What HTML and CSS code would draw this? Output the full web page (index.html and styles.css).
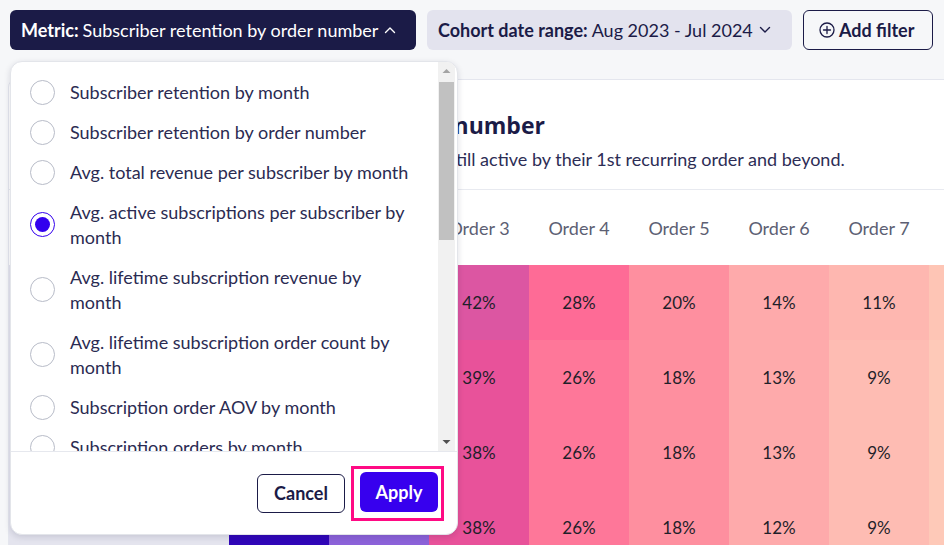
FILE: index.html
```html
<!DOCTYPE html>
<html lang="en">
<head>
<meta charset="utf-8">
<title>Retention</title>
<link rel="stylesheet" href="styles.css">
</head>
<body>
<div class="page">
  <div class="toolbar">
    <button class="pill pill-dark"><b>Metric:</b> Subscriber retention by order number
      <svg class="chev" width="12" height="8" viewBox="0 0 12 8"><path d="M1.5 6.5 L6 2 L10.5 6.5" fill="none" stroke="#ffffff" stroke-width="1.4" stroke-linecap="round" stroke-linejoin="round"/></svg>
    </button>
    <button class="pill pill-light"><b>Cohort date range:</b> Aug 2023 - Jul 2024
      <svg class="chev" width="12" height="8" viewBox="0 0 12 8"><path d="M1.5 1.5 L6 6 L10.5 1.5" fill="none" stroke="#1b1b47" stroke-width="1.4" stroke-linecap="round" stroke-linejoin="round"/></svg>
    </button>
    <button class="pill pill-outline">
      <svg class="plus" width="16" height="16" viewBox="0 0 16 16"><circle cx="8" cy="8" r="7" fill="none" stroke="#1b1b47" stroke-width="1.3"/><path d="M8 4.5 V11.5 M4.5 8 H11.5" stroke="#1b1b47" stroke-width="1.3" stroke-linecap="round"/></svg>
      <b>Add filter</b>
    </button>
  </div>

  <div class="card">
    <div class="card-head">
      <h2>Subscriber retention by order number</h2>
      <p>The percentage of our subscribers who are still active by their 1st recurring order and beyond.</p>
    </div>
    <div class="heat">
      <div class="hcell cohort">Cohort</div>
      <div class="hcell">Order 1</div>
      <div class="hcell">Order 2</div>
      <div class="hcell">Order 3</div>
      <div class="hcell">Order 4</div>
      <div class="hcell">Order 5</div>
      <div class="hcell">Order 6</div>
      <div class="hcell">Order 7</div>
      <div class="hcell">Order 8</div>

      <div class="cell cohort">Aug 2023</div>
      <div class="cell c1">100%</div>
      <div class="cell c2">61%</div>
      <div class="cell r1c3">42%</div>
      <div class="cell r1c4">28%</div>
      <div class="cell c5">20%</div>
      <div class="cell c6">14%</div>
      <div class="cell r1c7">11%</div>
      <div class="cell r1c8">8%</div>

      <div class="cell cohort">Sep 2023</div>
      <div class="cell c1">100%</div>
      <div class="cell c2">58%</div>
      <div class="cell c3">39%</div>
      <div class="cell c4">26%</div>
      <div class="cell c5">18%</div>
      <div class="cell c6">13%</div>
      <div class="cell c7">9%</div>
      <div class="cell c8">7%</div>

      <div class="cell cohort">Oct 2023</div>
      <div class="cell c1">100%</div>
      <div class="cell c2">57%</div>
      <div class="cell c3">38%</div>
      <div class="cell c4">26%</div>
      <div class="cell c5">18%</div>
      <div class="cell c6">13%</div>
      <div class="cell c7">9%</div>
      <div class="cell c8">7%</div>

      <div class="cell cohort">Nov 2023</div>
      <div class="cell c1">100%</div>
      <div class="cell c2">57%</div>
      <div class="cell c3">38%</div>
      <div class="cell c4">26%</div>
      <div class="cell c5">18%</div>
      <div class="cell c6">12%</div>
      <div class="cell c7">9%</div>
      <div class="cell c8">7%</div>
    </div>
  </div>

  <div class="dropdown">
    <div class="dd-body">
      <div class="dd-list">
        <label class="opt"><span class="radio"></span><span class="opt-text">Subscriber retention by month</span></label>
        <label class="opt"><span class="radio"></span><span class="opt-text">Subscriber retention by order number</span></label>
        <label class="opt"><span class="radio"></span><span class="opt-text">Avg. total revenue per subscriber by month</span></label>
        <label class="opt"><span class="radio radio-on"></span><span class="opt-text">Avg. active subscriptions per subscriber by month</span></label>
        <label class="opt"><span class="radio"></span><span class="opt-text">Avg. lifetime subscription revenue by month</span></label>
        <label class="opt"><span class="radio"></span><span class="opt-text">Avg. lifetime subscription order count by month</span></label>
        <label class="opt"><span class="radio"></span><span class="opt-text">Subscription order AOV by month</span></label>
        <label class="opt"><span class="radio"></span><span class="opt-text">Subscription orders by month</span></label>
        <label class="opt"><span class="radio"></span><span class="opt-text">Subscription revenue by month</span></label>
      </div>
      <div class="sbar">
        <svg class="sb-arrow" width="17" height="17" viewBox="0 0 17 17"><path d="M4.5 11 L8.5 7 L12.5 11 Z" fill="#a3a3a3"/></svg>
        <div class="sb-track"><div class="sb-thumb"></div></div>
        <svg class="sb-arrow" width="17" height="17" viewBox="0 0 17 17"><path d="M4.5 6 L8.5 10 L12.5 6 Z" fill="#505050"/></svg>
      </div>
    </div>
    <div class="dd-foot">
      <button class="btn btn-cancel">Cancel</button>
      <span class="focus-ring"><button class="btn btn-apply">Apply</button></span>
    </div>
  </div>
</div>
</body>
</html>
```
FILE: styles.css
```css
* { box-sizing: border-box; }
html, body { margin: 0; padding: 0; }
body {
  background: #f6f7f9;
  font-family: Lato, "Open Sans", Arial, sans-serif;
  color: #1b1b47;
  overflow: hidden;
  width: 944px;
  height: 545px;
}
.page { position: relative; width: 944px; height: 545px; overflow: hidden; }

.toolbar {
  display: flex;
  gap: 11px;
  padding: 10px 10px 0 10px;
}
.pill {
  height: 40px;
  display: flex;
  align-items: center;
  justify-content: flex-start;
  border-radius: 6px;
  font-family: inherit;
  font-size: 18px;
  padding: 0 0 0 10px;
  border: 1px solid transparent;
  white-space: nowrap;
}
.pill b { font-weight: 700; margin-right: 4px; }
.pill .chev { margin-left: 6px; }
.pill-dark { width: 406px; background: #1b1b47; color: #ffffff; }
.pill-light { width: 365px; background: #e3e3ee; color: #1b1b47; }
.pill-outline { width: 130px; background: transparent; border-color: #1b1b47; color: #1b1b47; padding-left: 15px; }
.pill-outline .plus { margin-right: 4px; }

.card {
  margin: 29px 0 0 8px;
  width: 1100px;
  background: #ffffff;
  border: 1px solid #e4e6ee;
  border-radius: 8px;
}
.card-head {
  padding: 30px 24px 18px 99px;
  border-bottom: 1px solid #e8eaf0;
}
.card-head h2 {
  margin: 0;
  font-family: "Open Sans", Lato, sans-serif;
  font-size: 23px;
  line-height: 30px;
  font-weight: 700;
  color: #1b1b47;
}
.card-head p {
  margin: 7px 0 0 0;
  font-size: 18px;
  line-height: 24px;
  color: #2d2d55;
}

.heat {
  display: grid;
  grid-template-columns: 220px repeat(8, 100px);
  grid-auto-rows: 75px;
}
.hcell, .cell {
  display: flex;
  align-items: center;
  justify-content: center;
  font-size: 17px;
}
.hcell { color: #5d5f73; font-size: 18px; }
.cell { color: #1f1f2a; }
.cohort { background: #e4e4ee; justify-content: flex-start; padding-left: 20px; color: #1b1b47; }
.hcell.cohort { background: #ffffff; }
.c1 { background: #3006b8; color: #ffffff; }
.c2 { background: #8c62d9; color: #ffffff; }
.c3 { background: #e8529a; }
.r1c3 { background: #dc56a2; }
.c4 { background: #fe7799; }
.r1c4 { background: #fe6b96; }
.c5 { background: #fe8f9f; }
.c6 { background: #feaaab; }
.c7 { background: #febcb3; }
.r1c7 { background: #feb7b0; }
.c8 { background: #fec9b8; }
.r1c8 { background: #fec5b5; }

.dropdown {
  position: absolute;
  left: 10px;
  top: 61px;
  width: 448px;
  height: 474px;
  background: #ffffff;
  border: 1px solid #e3e5ea;
  border-radius: 12px;
  box-shadow: 0 2px 6px rgba(20, 20, 60, 0.14);
  overflow: hidden;
  display: flex;
  flex-direction: column;
}
.dd-body {
  display: flex;
  height: 390px;
  border-bottom: 1px solid #e6e8ee;
}
.dd-list {
  flex: 1;
  overflow: hidden;
  padding: 10px 26px 0 19px;
}
.opt {
  display: flex;
  align-items: center;
  gap: 15px;
  padding: 7.5px 0;
}
.radio {
  flex: 0 0 25px;
  width: 25px;
  height: 25px;
  border-radius: 50%;
  border: 1px solid #b8bcc8;
  background: #ffffff;
  display: flex;
  align-items: center;
  justify-content: center;
}
.radio-on { border: 1.5px solid #3300ee; }
.radio-on::after {
  content: "";
  width: 15px;
  height: 15px;
  border-radius: 50%;
  background: #3300ee;
}
.opt-text {
  font-size: 18px;
  line-height: 25px;
  color: #2b2b52;
}
.sbar {
  flex: 0 0 17px;
  width: 17px;
  margin-right: 2px;
  background: #f1f1f1;
  display: flex;
  flex-direction: column;
}
.sb-arrow { display: block; flex: 0 0 17px; }
.sb-track { flex: 1; padding: 3px 1px 0 1px; }
.sb-thumb { height: 158px; background: #c1c1c1; }

.dd-foot {
  flex: 1;
  display: flex;
  justify-content: flex-end;
  align-items: center;
  gap: 6px;
  padding: 0 13px 0 0;
}
.btn {
  font-family: inherit;
  font-size: 18px;
  font-weight: 700;
  height: 40px;
  border-radius: 6px;
  cursor: pointer;
}
.btn-cancel {
  width: 88px;
  height: 39px;
  background: #ffffff;
  border: 1px solid #1b1b47;
  color: #1b1b47;
}
.focus-ring {
  display: block;
  border: 3px solid #ff0a84;
  padding: 3px 3px 6px 6px;
}
.btn-apply {
  display: block;
  width: 78px;
  background: #3700ee;
  border: none;
  color: #ffffff;
}
```
